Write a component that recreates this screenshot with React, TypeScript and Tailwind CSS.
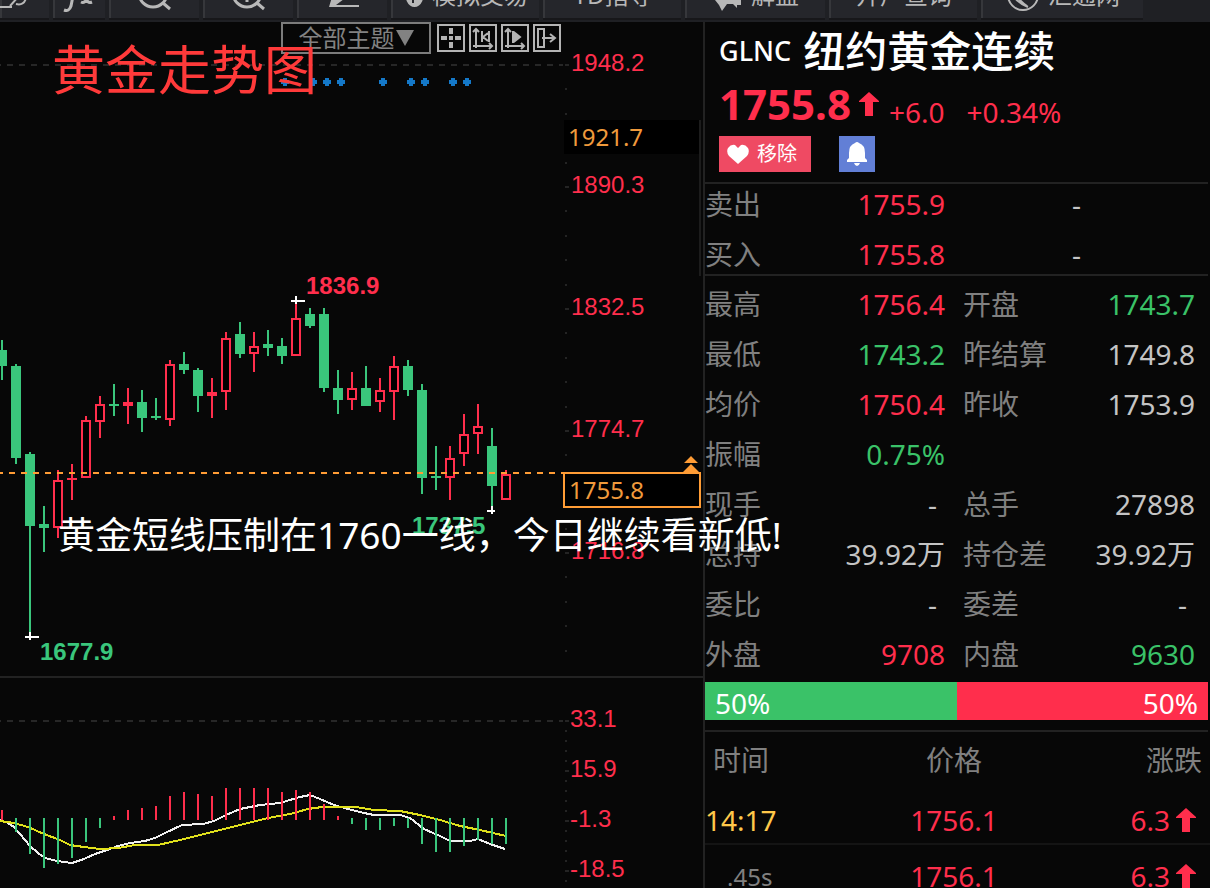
import type { ReactNode } from "react";

const RED = "#ff2e4c";
const GREEN = "#3ac67c";

type Candle = [high: number, low: number, top: number, bottom: number, up: boolean];

const candles: Candle[] = [
  [340, 380, 350, 366, false],
  [364, 464, 366, 458, false],
  [452, 634, 454, 526, false],
  [506, 552, 524, 528, false],
  [470, 538, 480, 528, true],
  [464, 500, 478, 480, true],
  [416, 478, 420, 478, true],
  [396, 438, 404, 422, true],
  [384, 416, 404, 406, false],
  [388, 424, 402, 406, true],
  [390, 432, 402, 418, false],
  [398, 420, 416, 418, false],
  [360, 426, 364, 420, true],
  [352, 374, 364, 370, false],
  [368, 412, 370, 396, false],
  [378, 418, 392, 396, true],
  [332, 410, 338, 392, true],
  [322, 358, 334, 354, false],
  [332, 372, 346, 354, true],
  [330, 356, 344, 348, false],
  [338, 364, 346, 356, false],
  [304, 356, 318, 356, true],
  [308, 328, 314, 326, false],
  [308, 392, 314, 388, false],
  [370, 414, 388, 400, false],
  [372, 410, 388, 400, true],
  [366, 406, 388, 406, false],
  [378, 412, 390, 402, true],
  [356, 420, 366, 392, true],
  [360, 396, 366, 390, false],
  [384, 494, 390, 478, false],
  [446, 490, 476, 478, false],
  [446, 500, 458, 478, true],
  [414, 466, 434, 454, true],
  [404, 454, 426, 434, true],
  [428, 506, 446, 486, false],
  [470, 500, 474, 500, true],
];

const histogram: [from: number, to: number][] = [
  [810, 820], [818, 832], [818, 854], [818, 868], [818, 864], [818, 858], [818, 842], [818, 828],
  [816, 820], [810, 820], [808, 820], [806, 820], [796, 820], [792, 820], [794, 820], [796, 820],
  [788, 820], [788, 820], [788, 820], [788, 820], [792, 820], [790, 820], [792, 820], [804, 820],
  [816, 820], [818, 824], [818, 830], [818, 830], [818, 826], [818, 828], [818, 844], [818, 852],
  [818, 852], [818, 846], [818, 840], [818, 844], [818, 844],
];

const markers = [285, 313, 327, 341, 383, 411, 425, 453, 467];

function CandleChart() {
  return (
    <svg viewBox="0 22 569 654" preserveAspectRatio="xMaxYMin meet" className="h-[654px] min-w-0 flex-1" aria-label="黄金走势图">
      <g shapeRendering="crispEdges">
        <line x1="-5" x2="563" y1="65" y2="65" stroke="#272727" strokeWidth="2" strokeDasharray="6 6" />
        {Array.from({ length: 25 }, (_, i) => (
          <rect key={i} x="565" y={Math.round(64 + i * 24.4)} width={i % 5 === 0 ? 6 : 2} height="2" fill="#242424" />
        ))}
        {candles.map(([high, low, top, bottom, up], i) => {
          const x = 2 + i * 14;
          const color = up ? RED : GREEN;
          const hollow = up && bottom - top > 4;
          return (
            <g key={i}>
              <rect x={x - 1} y={high} width="2" height={low - high} fill={color} />
              <rect x={x - 5} y={top} width="10" height={bottom - top} fill={color} />
              {hollow && <rect x={x - 3} y={top + 2} width="6" height={bottom - top - 4} fill="#000" />}
            </g>
          );
        })}
        <line x1="-3" x2="565" y1="473" y2="473" stroke="#ff9c35" strokeWidth="2" strokeDasharray="6 6" />
        <path d="M25 637H39M30 632V640M291 301H305M296 296V304M487 511H495M492 506V514" stroke="#fff" strokeWidth="2" />
      </g>
      {markers.map((x) => (
        <path key={x} d={`M${x - 2} 78h4v2h2v4h-2v2h-4v-2h-2v-4h2z`} fill="#1478c8" />
      ))}
      <g fontFamily="'Liberation Sans', sans-serif" fontSize="24" fontWeight="700">
        <text x="306" y="294" fill={RED}>1836.9</text>
        <text x="40" y="660" fill={GREEN}>1677.9</text>
        <text x="412" y="534" fill={GREEN}>1737.5</text>
      </g>
    </svg>
  );
}

function MacdChart() {
  return (
    <svg viewBox="0 678 569 210" preserveAspectRatio="xMaxYMin meet" className="h-[210px] min-w-0 flex-1" aria-label="MACD" shapeRendering="crispEdges">
      <line x1="-5" x2="563" y1="721" y2="721" stroke="#272727" strokeWidth="2" strokeDasharray="6 6" />
      {Array.from({ length: 17 }, (_, i) => (
        <rect key={i} x="565" y={720 + i * 10} width={i % 5 === 0 ? 6 : 2} height="2" fill="#242424" />
      ))}
      <polyline
        fill="none"
        stroke="#f0f0f0"
        strokeWidth="2"
        points="0,820 8,823 14,827 20,834 30,846 38,853 45,858 57,861 72,863 84,859 95,854 107,850 118,846 130,843 145,841 155,838 165,833 182,825 203,824 214,821 226,815 240,809 260,805 280,803 300,797 310,795 320,799 334,805 348,809 364,813 374,815 400,815 410,818 424,829 440,836 450,841 470,841 478,839 490,844 505,849"
      />
      <polyline
        fill="none"
        stroke="#e0e01c"
        strokeWidth="2"
        points="0,821 14,823 28,827 44,834 60,840 70,845 84,847 100,849 118,848 135,845 158,845 180,840 212,832 240,825 268,818 290,814 308,809 322,807 356,807 374,810 400,811 420,815 440,820 460,826 480,830 506,836"
      />
      {histogram.map(([from, to], i) => (
        <rect key={i} x={1 + i * 14} y={from} width="2" height={to - from} fill={to === 820 ? RED : GREEN} />
      ))}
    </svg>
  );
}

function UpArrow({ className }: { className: string }) {
  return (
    <svg viewBox="0 0 20 24" className={className} fill={RED} aria-hidden="true">
      <path d="M10 0L20 9V10H14V24H6V10H0V9Z" />
    </svg>
  );
}

const toolClass =
  "flex shrink-0 items-center justify-center gap-2 whitespace-nowrap border-l-2 border-[#36373b] bg-[#25262b] text-[24px] leading-6 text-[#b8b8b8] shadow-[0_2px_0_#17171a]";

function ToolButton({ width, label, children }: { width: string; label: string; children: ReactNode }) {
  return (
    <button type="button" aria-label={label} className={`${toolClass} ${width}`}>
      {children}
    </button>
  );
}

function Toolbar() {
  const stroke = { fill: "none", stroke: "currentColor", strokeWidth: 2 };
  return (
    <header className="flex h-[22px] shrink-0 items-end overflow-hidden bg-[#1f2024]">
      <nav className="flex h-[50px] shrink-0 items-stretch gap-1 pb-1" aria-label="工具栏">
        <ToolButton width="w-[49px]" label="画线">
          <svg width="40" height="30" viewBox="0 0 40 30" {...stroke} className="-ml-4">
            <path d="M0 27H14M12 26L28 8M18 24q8 2 10-6M24 4l8 6" />
          </svg>
        </ToolButton>
        <ToolButton width="w-[52px]" label="函数">
          <svg width="36" height="36" viewBox="0 0 36 36" {...stroke} strokeWidth={3}>
            <path d="M2 33q5 2 7-4L14 4q1-4 6-2M8 12h10M19 14q4-1 5 6t6 5M33 13q-4 0-7 7t-7 5" />
          </svg>
        </ToolButton>
        <ToolButton width="w-[90px]" label="缩小">
          <svg width="36" height="32" viewBox="0 0 36 32" {...stroke} strokeWidth={3}>
            <circle cx="16" cy="14" r="14" />
            <path d="M9 14h14M26 24l7 6" />
          </svg>
        </ToolButton>
        <ToolButton width="w-[90px]" label="放大">
          <svg width="36" height="32" viewBox="0 0 36 32" {...stroke} strokeWidth={3}>
            <circle cx="16" cy="14" r="14" />
            <path d="M9 14h14M16 7v16M26 24l7 6" />
          </svg>
        </ToolButton>
        <ToolButton width="w-[90px]" label="编辑">
          <svg width="34" height="28" viewBox="0 0 34 28" fill="currentColor">
            <path d="M3 26h30v-2H10l8-6L27 5l-7-5L6 16z" />
          </svg>
        </ToolButton>
        <ToolButton width="w-[148px]" label="模拟交易">
          <svg width="20" height="28" viewBox="0 0 20 28" fill="currentColor">
            <path d="M10 2a9 12 0 1 0 1 0zM8 8h2v3h4v2h-4v3h4v2h-4v4H8v-4H4v-2h4v-3H4v-2h4z" fillRule="evenodd" />
          </svg>
          模拟交易
        </ToolButton>
        <ToolButton width="w-[138px]" label="TD指导">
          TD指导
        </ToolButton>
        <ToolButton width="w-[140px]" label="解盘">
          <svg width="30" height="32" viewBox="0 0 30 32" fill="currentColor">
            <path d="M2 4h20v10h6v12h-4v3l-4-4h-6l-5 7-3-6-4-5z" />
          </svg>
          解盘
        </ToolButton>
        <ToolButton width="w-[148px]" label="开户查询">
          开户查询
        </ToolButton>
        <ToolButton width="w-[162px]" label="汇通网">
          <svg width="34" height="34" viewBox="0 0 34 34" {...stroke}>
            <circle cx="17" cy="17" r="15" />
            <path d="M4 10q2 12 18 19M9 4q-3 14 12 24" />
          </svg>
          汇通网
        </ToolButton>
      </nav>
    </header>
  );
}

const chartButton = "flex size-[28px] items-center justify-center border-2 border-[#b4b4b4] bg-[#070707] text-[#b4b4b4]";

function ChartControls() {
  const svg = { width: 24, height: 24, viewBox: "0 0 24 24", fill: "none", stroke: "currentColor", strokeWidth: 2 };
  return (
    <div className="absolute left-[281px] top-0 flex items-center gap-1">
      <label className="mr-[2px] flex h-[32px] w-[150px] items-center justify-center border-2 border-[#7c7c7c] text-[24px] leading-6 text-[#828282]">
        <span className="sr-only">主题</span>
        <select className="w-[97px] appearance-none bg-transparent outline-none">
          <option>全部主题</option>
        </select>
        <svg width="18" height="16" viewBox="0 0 18 16" fill="currentColor" aria-hidden="true">
          <path d="M0 0H18L9 16Z" />
        </svg>
      </label>
      <button type="button" aria-label="十字光标" className={chartButton}>
        <svg {...svg} strokeWidth={4} shapeRendering="crispEdges">
          <path d="M2 12H8M10 12H14M16 12H22M12 2V8M12 16V22" />
        </svg>
      </button>
      <button type="button" aria-label="起点" className={chartButton}>
        <svg {...svg}>
          <path d="M5 3V22M2 20H21M2 6l3-3 3 3M18 17l3 3-3 3M11 5V16M18 5V16M17 7l-5 4 5 4" />
        </svg>
      </button>
      <button type="button" aria-label="播放" className={chartButton}>
        <svg {...svg}>
          <path d="M5 3V22M2 20H21M2 6l3-3 3 3M18 17l3 3-3 3M10 5V17" />
          <path d="M12 7l5 4-5 4z" fill="currentColor" />
        </svg>
      </button>
      <button type="button" aria-label="右移" className={chartButton}>
        <svg {...svg}>
          <path d="M3 3H9V21H3ZM7 12H20M15 8l5 4-5 4" />
        </svg>
      </button>
    </div>
  );
}

const axisFont = "font-['Liberation_Sans',sans-serif] text-[24px] leading-6 text-[#ff2e4c]";

function ChartColumn() {
  return (
    <section className="relative flex min-w-0 flex-1 flex-col border-r-2 border-[#222]">
      <div className="relative flex shrink-0 border-b-2 border-[#222]">
        <CandleChart />
        <ol className={`w-[134px] shrink-0 pt-[29px] ${axisFont}`}>
          {["1948.2", "1890.3", "1832.5", "1774.7", "1716.8"].map((v) => (
            <li key={v} className="h-[122px] pl-[2px]">{v}</li>
          ))}
        </ol>
        <div className="absolute right-[2px] top-[98px] h-[156px] w-[137px] border-r-2 border-[#1c1c1c]">
          <div className="flex h-[34px] items-center bg-black pl-1 font-['Noto_Sans',sans-serif] text-[24px] leading-6 text-[#f09a3c]">1921.7</div>
        </div>
        <div className="absolute right-[2px] top-[450px] flex h-[36px] w-[138px] items-center border-2 border-[#ff9c35] bg-black pl-1 font-['Noto_Sans',sans-serif] text-[24px] leading-6 text-[#f09a3c]">
          1755.8
        </div>
        <svg viewBox="0 0 16 16" className="absolute right-[4px] top-[434px] size-4" fill="#ff9c35" aria-hidden="true">
          <path d="M8 0L15 7H1ZM8 8L16 16H0Z" />
        </svg>
        <ChartControls />
      </div>
      <div className="flex shrink-0">
        <MacdChart />
        <ol className={`w-[134px] shrink-0 pt-[29px] ${axisFont}`}>
          {["33.1", "15.9", "-1.3", "-18.5"].map((v) => (
            <li key={v} className="h-[50px] pl-[1px]">{v}</li>
          ))}
        </ol>
      </div>
      <h1 className="absolute left-[52px] top-4 whitespace-nowrap text-[53px] leading-[64px] text-[#ff3a3a]">黄金走势图</h1>
      <p className="absolute left-[58px] top-[490px] z-10 whitespace-nowrap text-[37px] leading-[46px] text-white">黄金短线压制在1760一线，今日继续看新低!</p>
    </section>
  );
}

const red = "text-[#ff2e4c]";
const green = "text-[#3ac268]";
const grey = "text-[#c4c4c4]";

const quotes: [string, string, string, string, string, string][] = [
  ["最高", "1756.4", red, "开盘", "1743.7", green],
  ["最低", "1743.2", green, "昨结算", "1749.8", grey],
  ["均价", "1750.4", red, "昨收", "1753.9", grey],
  ["振幅", "0.75%", green, "", "", grey],
  ["现手", "-", grey, "总手", "27898", grey],
  ["总持", "39.92万", grey, "持仓差", "39.92万", grey],
  ["委比", "-", grey, "委差", "-", grey],
  ["外盘", "9708", red, "内盘", "9630", green],
];

const labelCell = "text-left font-normal text-[#808080]";

function Value({ children }: { children: string }) {
  return <span className={children === "-" ? "pr-2" : ""}>{children}</span>;
}

function QuoteColumn() {
  return (
    <aside className="flex w-[505px] shrink-0 flex-col text-[28px] leading-8">
      <section className="mr-[2px] h-[162px] shrink-0 border-b-2 border-[#222] pl-[14px] pt-[6px]">
        <h2 className="flex h-[46px] items-center gap-3 whitespace-nowrap text-white">
          <span className="text-[27px] font-medium">GLNC</span>
          <span className="text-[42px] font-medium">纽约黄金连续</span>
        </h2>
        <div className={`flex h-[60px] items-center ${red}`}>
          <strong className="text-[42px] leading-[60px]">1755.8</strong>
          <UpArrow className="ml-2 h-6 w-5" />
          <span className="ml-[10px] pt-4">+6.0</span>
          <span className="ml-[22px] pt-4">+0.34%</span>
        </div>
        <div className="mt-[2px] flex gap-7">
          <button type="button" className="flex h-[36px] w-[92px] items-center gap-2 bg-[#ef4a63] pl-2 text-[20px] leading-6 text-white">
            <svg width="22" height="20" viewBox="0 0 22 20" fill="currentColor" aria-hidden="true">
              <path d="M11 20L2 12Q-1 8 1 4Q4 0 8 1L11 4L14 1Q18 0 21 4Q23 8 20 12Z" />
            </svg>
            移除
          </button>
          <button type="button" aria-label="预警" className="flex size-[36px] items-center justify-center bg-[#627fd6] text-white">
            <svg width="20" height="24" viewBox="0 0 20 24" fill="currentColor" aria-hidden="true">
              <path d="M8 1q2-2 4 0q6 2 6 10v5l2 2v2H0v-2l2-2v-5q0-8 6-10zM7 21h6q-1 3-3 3t-3-3z" />
            </svg>
          </button>
        </div>
      </section>

      <section className="mr-[2px] h-[92px] shrink-0 border-b-2 border-[#222]">
        <table className="-mt-[5px] w-full table-fixed border-collapse">
          <tbody>
            {[["卖出", "1755.9"], ["买入", "1755.8"]].map(([label, value]) => (
              <tr key={label} className="h-[50px]">
                <th scope="row" className={`w-[96px] ${labelCell}`}>{label}</th>
                <td className={`w-[144px] text-right ${red}`}>{value}</td>
                <td className={`text-center ${grey}`}>-</td>
              </tr>
            ))}
          </tbody>
        </table>
      </section>

      <section className="mr-[2px] shrink-0 border-b-2 border-[#222] pb-[10px] pt-[3px]">
        <table className="w-full table-fixed border-collapse">
          <tbody>
            {quotes.map(([l1, v1, c1, l2, v2, c2]) => (
              <tr key={l1} className="h-[50px]">
                <th scope="row" className={`w-[96px] ${labelCell}`}>{l1}</th>
                <td className={`w-[144px] text-right ${c1}`}><Value>{v1}</Value></td>
                <th scope="row" className={`w-[120px] pl-[18px] ${labelCell}`}>{l2}</th>
                <td className={`pr-[13px] text-right ${c2}`}><Value>{v2}</Value></td>
              </tr>
            ))}
          </tbody>
        </table>
        <div className="mt-[3px] flex h-[38px] items-center text-white">
          <div className="flex h-full flex-1 items-center bg-[#3ac268] pl-[10px] pt-1">50%</div>
          <div className="flex h-full flex-1 items-center justify-end bg-[#ff2e4c] pr-[10px] pt-1">50%</div>
        </div>
      </section>

      <table className="w-full shrink-0 table-fixed border-collapse">
        <thead>
          <tr className="h-[56px] text-[#808080]">
            <th scope="col" className="w-[170px] pl-2 text-left font-normal">时间</th>
            <th scope="col" className="w-[158px] font-normal">价格</th>
            <th scope="col" className="pr-2 text-right font-normal">涨跌</th>
          </tr>
        </thead>
        <tbody>
          {[["14:17", "text-[#ffc84a]"], [".45s", "pl-[22px] text-[24px] text-[#808080]"]].map(([time, style]) => (
            <tr key={time} className="h-[56px] border-b-2 border-[#141414]">
              <td className="pt-2"><span className={style}>{time}</span></td>
              <td className={`pt-2 text-center ${red}`}>1756.1</td>
              <td className={`pr-[14px] pt-2 ${red}`}>
                <span className="flex items-center justify-end gap-[6px]">
                  6.3
                  <UpArrow className="h-6 w-5" />
                </span>
              </td>
            </tr>
          ))}
        </tbody>
      </table>
    </aside>
  );
}

export default function App() {
  return (
    <div lang="zh-CN" className="flex h-screen flex-col overflow-hidden bg-[#070707] font-['Noto_Sans','Noto_Sans_CJK_SC',sans-serif]">
      <Toolbar />
      <main className="flex min-h-0 flex-1 overflow-hidden">
        <ChartColumn />
        <QuoteColumn />
      </main>
    </div>
  );
}
